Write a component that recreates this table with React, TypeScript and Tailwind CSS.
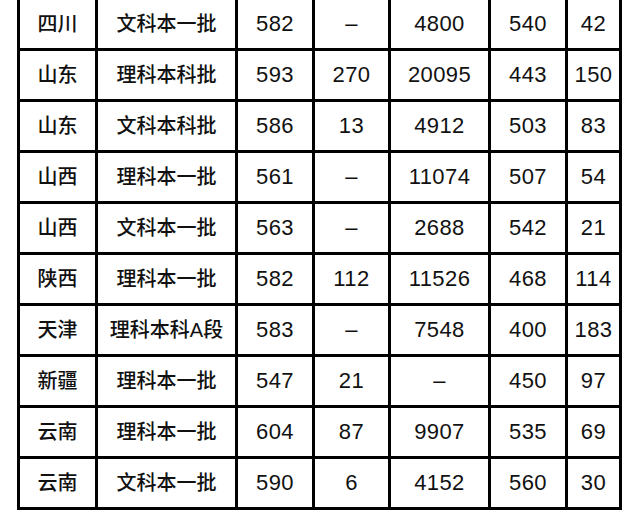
const rows: string[][] = [
  ["四川", "文科本一批", "582", "–", "4800", "540", "42"],
  ["山东", "理科本科批", "593", "270", "20095", "443", "150"],
  ["山东", "文科本科批", "586", "13", "4912", "503", "83"],
  ["山西", "理科本一批", "561", "–", "11074", "507", "54"],
  ["山西", "文科本一批", "563", "–", "2688", "542", "21"],
  ["陕西", "理科本一批", "582", "112", "11526", "468", "114"],
  ["天津", "理科本科A段", "583", "–", "7548", "400", "183"],
  ["新疆", "理科本一批", "547", "21", "–", "450", "97"],
  ["云南", "理科本一批", "604", "87", "9907", "535", "69"],
  ["云南", "文科本一批", "590", "6", "4152", "560", "30"],
];

export default function App() {
  return (
    <div className="w-[640px] h-[516px] overflow-hidden bg-white">
      <div
        className="ml-[17px] -mt-[3px] inline-grid grid-cols-[75px_137px_74px_73px_97px_74px_51px] auto-rows-[48px] gap-[3px] bg-black p-[3px] text-[#111]"
        style={{ fontFamily: '"Liberation Sans", "Noto Sans CJK SC", sans-serif' }}
      >
        {rows.map((row, i) =>
          row.map((cell, j) => (
            <div
              key={`${i}-${j}`}
              className={
                "flex items-center justify-center bg-white " +
                (j < 2
                  ? "text-[20px] font-medium pb-[1px]"
                  : "text-[22px] tracking-[0.4px] pb-[2px]")
              }
            >
              {cell}
            </div>
          ))
        )}
      </div>
    </div>
  );
}
